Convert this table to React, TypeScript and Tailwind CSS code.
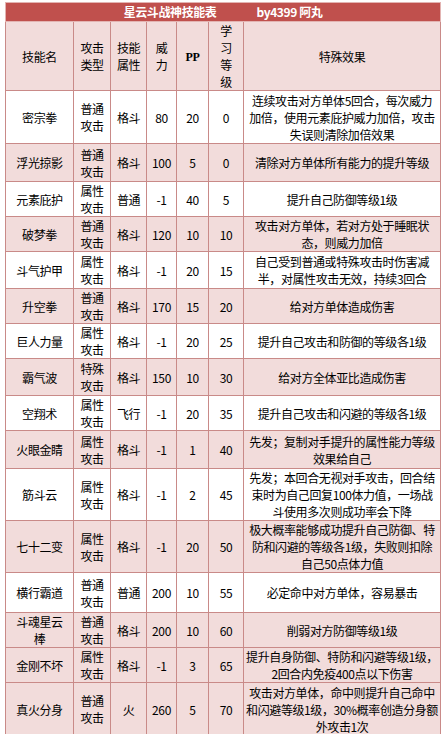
import React from "react";

type Skill = {
  name: string[];
  kind: string;
  attr: string;
  power: string;
  pp: string;
  level: string;
  effect: string[];
  h: string;
  pink: boolean;
};

const skills: Skill[] = [
  { name: ["密宗拳"], kind: "普通", attr: "格斗", power: "80", pp: "20", level: "0", effect: ["连续攻击对方单体5回合，每次威力", "加倍，使用元素庇护威力加倍，攻击", "失误则清除加倍效果"], h: "h-[53px]", pink: false },
  { name: ["浮光掠影"], kind: "普通", attr: "格斗", power: "100", pp: "5", level: "0", effect: ["清除对方单体所有能力的提升等级"], h: "h-[38px]", pink: true },
  { name: ["元素庇护"], kind: "属性", attr: "普通", power: "-1", pp: "40", level: "5", effect: ["提升自己防御等级1级"], h: "h-[34px]", pink: false },
  { name: ["破梦拳"], kind: "普通", attr: "格斗", power: "120", pp: "10", level: "10", effect: ["攻击对方单体，若对方处于睡眠状", "态，则威力加倍"], h: "h-[34px]", pink: true },
  { name: ["斗气护甲"], kind: "属性", attr: "格斗", power: "-1", pp: "20", level: "15", effect: ["自己受到普通或特殊攻击时伤害减", "半，对属性攻击无效，持续3回合"], h: "h-[37px]", pink: false },
  { name: ["升空拳"], kind: "普通", attr: "格斗", power: "170", pp: "15", level: "20", effect: ["给对方单体造成伤害"], h: "h-[35px]", pink: true },
  { name: ["巨人力量"], kind: "属性", attr: "格斗", power: "-1", pp: "20", level: "25", effect: ["提升自己攻击和防御的等级各1级"], h: "h-[34px]", pink: false },
  { name: ["霸气波"], kind: "特殊", attr: "格斗", power: "150", pp: "10", level: "30", effect: ["给对方全体亚比造成伤害"], h: "h-[37px]", pink: true },
  { name: ["空翔术"], kind: "属性", attr: "飞行", power: "-1", pp: "20", level: "35", effect: ["提升自己攻击和闪避的等级各1级"], h: "h-[35px]", pink: false },
  { name: ["火眼金睛"], kind: "属性", attr: "格斗", power: "-1", pp: "1", level: "40", effect: ["先发；复制对手提升的属性能力等级", "效果给自己"], h: "h-[38px]", pink: true },
  { name: ["筋斗云"], kind: "属性", attr: "格斗", power: "-1", pp: "2", level: "45", effect: ["先发；本回合无视对手攻击，回合结", "束时为自己回复100体力值，一场战", "斗使用多次则成功率会下降"], h: "h-[52px]", pink: false },
  { name: ["七十二变"], kind: "属性", attr: "格斗", power: "-1", pp: "20", level: "50", effect: ["极大概率能够成功提升自己防御、特", "防和闪避的等级各1级，失败则扣除", "自己50点体力值"], h: "h-[50px]", pink: true },
  { name: ["横行霸道"], kind: "普通", attr: "普通", power: "200", pp: "10", level: "55", effect: ["必定命中对方单体，容易暴击"], h: "h-[40px]", pink: false },
  { name: ["斗魂星云", "棒"], kind: "普通", attr: "格斗", power: "200", pp: "10", level: "60", effect: ["削弱对方防御等级1级"], h: "h-[35px]", pink: true },
  { name: ["金刚不坏"], kind: "属性", attr: "格斗", power: "-1", pp: "3", level: "65", effect: ["提升自身防御、特防和闪避等级1级，", "2回合内免疫400点以下伤害"], h: "h-[35px]", pink: true },
  { name: ["真火分身"], kind: "普通", attr: "火", power: "260", pp: "5", level: "70", effect: ["攻击对方单体，命中则提升自己命中", "和闪避等级1级，30%概率创造分身额", "外攻击1次"], h: "h-[53px]", pink: true },
];

const cell = "border border-[#c98a88] px-[1px] py-0 text-center align-middle whitespace-nowrap";

function Lines({ lines }: { lines: string[] }) {
  return (
    <>
      {lines.map((l, i) => (
        <div key={i}>{l}</div>
      ))}
    </>
  );
}

export default function App() {
  return (
    <div className="min-h-screen bg-white pt-[2px] pl-[5px]">
      <table
        className="table-fixed border-collapse text-[12px] leading-[17px] tracking-[-0.4px] text-black"
        style={{ fontFamily: '"Noto Sans CJK SC", "Noto Sans", sans-serif', width: 435 }}
      >
        <colgroup>
          <col className="w-[68px]" />
          <col className="w-[37px]" />
          <col className="w-[36px]" />
          <col className="w-[30px]" />
          <col className="w-[32px]" />
          <col className="w-[35px]" />
          <col className="w-[197px]" />
        </colgroup>
        <tbody>
          {/* title bar */}
          <tr className="h-[19px]">
            <td colSpan={7} className="border border-[#e3b4b2] bg-[#c0504d] p-0 align-middle">
              <div className="flex justify-center gap-[40px] font-bold text-white leading-[18px]">
                <span>星云斗战神技能表</span>
                <span>by4399 阿丸</span>
              </div>
            </td>
          </tr>

          {/* header */}
          <tr className="h-[69px] bg-[#f2dcdb]">
            <td className={cell}>技能名</td>
            <td className={cell}><Lines lines={["攻击", "类型"]} /></td>
            <td className={cell}><Lines lines={["技能", "属性"]} /></td>
            <td className={cell}><Lines lines={["威", "力"]} /></td>
            <td className={cell}>
              <span className="font-bold" style={{ fontFamily: '"Liberation Serif", serif' }}>PP</span>
            </td>
            <td className={cell}><Lines lines={["学", "习", "等", "级"]} /></td>
            <td className={cell}>特殊效果</td>
          </tr>

          {skills.map((s, i) => (
            <tr key={i} className={`${s.h} ${s.pink ? "bg-[#f2dcdb]" : "bg-white"}`}>
              <td className={cell}><Lines lines={s.name} /></td>
              <td className={cell}><Lines lines={[s.kind, "攻击"]} /></td>
              <td className={cell}>{s.attr}</td>
              <td className={cell}>{s.power}</td>
              <td className={cell}>{s.pp}</td>
              <td className={cell}>{s.level}</td>
              <td className={cell}><Lines lines={s.effect} /></td>
            </tr>
          ))}
        </tbody>
      </table>
    </div>
  );
}
